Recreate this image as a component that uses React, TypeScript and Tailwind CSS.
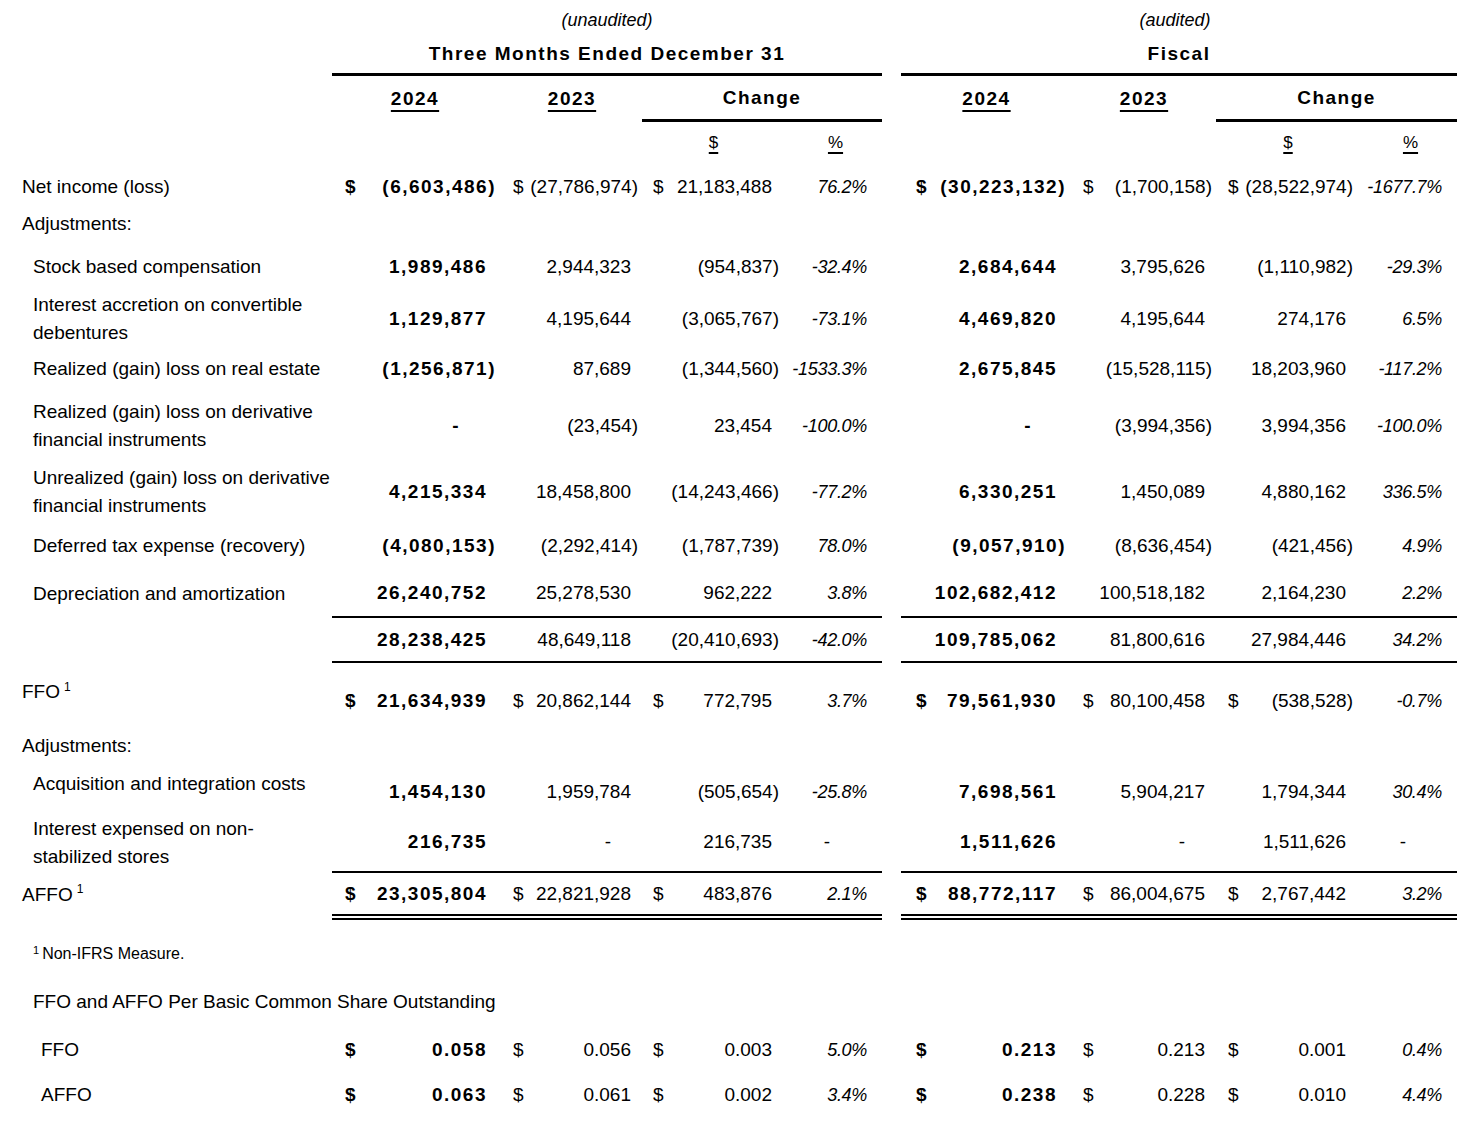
import React from "react";

const GRID =
  "grid grid-cols-[332px_170px_140px_143px_97px_19px_171px_144px_144px_97px_17px]";

const parenPr = ["pr-[6px]", "pr-[4px]", "pr-[6px]", "pr-[15px]", "pr-[6px]", "pr-[4px]", "pr-[7px]", "pr-[15px]"];
const digitPr = ["pr-[15px]", "pr-[11px]", "pr-[13px]", "pr-[15px]", "pr-[15px]", "pr-[11px]", "pr-[14px]", "pr-[15px]"];
const dashPr = ["pr-[42px]", "pr-[31px]", "pr-[35px]", "pr-[52px]", "pr-[40px]", "pr-[31px]", "pr-[35px]", "pr-[51px]"];
const dollarPl = ["pl-[13px]", "pl-[11px]", "pl-[11px]", "", "pl-[15px]", "pl-[11px]", "pl-[12px]", ""];

function cx(...a: (string | false | null | undefined)[]) {
  return a.filter(Boolean).join(" ");
}

function ValueCell({
  v,
  idx,
  dollar,
  border,
  valCls,
}: {
  v: string;
  idx: number;
  dollar?: boolean;
  border?: string;
  valCls?: string;
}) {
  const bold = idx === 0 || idx === 4;
  let pr = digitPr[idx];
  let style = bold ? "font-bold tracking-[1.5px]" : "";
  if (v === "-") {
    pr = dashPr[idx];
  } else if (v.endsWith("%")) {
    pr = digitPr[idx];
    style = "italic text-[18px] tracking-[-0.3px]";
  } else if (v.startsWith("(")) {
    pr = parenPr[idx];
  }
  return (
    <div className={cx("flex items-center", border, valCls)}>
      {dollar && idx % 4 !== 3 ? (
        <span className={cx(dollarPl[idx], bold && "font-bold")}>$</span>
      ) : null}
      {v ? <span className={cx("ml-auto whitespace-nowrap", pr, style)}>{v}</span> : null}
    </div>
  );
}

function Row({
  h,
  label,
  labelCls,
  vals,
  dollar,
  border,
  valCls,
}: {
  h: string;
  label?: React.ReactNode;
  labelCls?: string;
  vals?: string[];
  dollar?: boolean;
  border?: string;
  valCls?: string;
}) {
  const v = vals ?? ["", "", "", "", "", "", "", ""];
  return (
    <div className={cx(GRID, h)}>
      <div className={cx("flex items-center whitespace-nowrap leading-[28px]", labelCls ?? "pl-[33px]")}>
        <div>{label}</div>
      </div>
      {v.slice(0, 4).map((x, i) => (
        <ValueCell key={i} v={x} idx={i} dollar={dollar} border={border} valCls={valCls} />
      ))}
      <div />
      {v.slice(4).map((x, i) => (
        <ValueCell key={i + 4} v={x} idx={i + 4} dollar={dollar} border={border} valCls={valCls} />
      ))}
      <div />
    </div>
  );
}

const Sup = () => <sup className="text-[12px] ml-[4px] top-[-0.6em]">1</sup>;

export default function App() {
  return (
    <div className="w-[1474px] h-[1122px] bg-white text-black font-['Liberation_Sans',Arial,sans-serif] text-[19px] leading-[28px]">
      {/* header row 0 */}
      <div className={cx(GRID, "h-[36px]")}>
        <div />
        <div className="col-span-4 flex items-center justify-center italic text-[18px] pt-[4px]">(unaudited)</div>
        <div />
        <div className="col-span-4 flex items-center justify-center italic text-[18px] pr-[8px] pt-[4px]">(audited)</div>
        <div />
      </div>
      {/* header row 1 */}
      <div className={cx(GRID, "h-[40px]")}>
        <div />
        <div className="col-span-4 flex items-center justify-center font-bold tracking-[1.5px] border-b-[3px] border-black pb-[2px]">
          Three Months Ended December 31
        </div>
        <div />
        <div className="col-span-4 flex items-center justify-center font-bold tracking-[1.5px] border-b-[3px] border-black pb-[2px]">
          Fiscal
        </div>
        <div />
      </div>
      {/* header row 2 */}
      <div className={cx(GRID, "h-[46px]")}>
        <div />
        <div className="flex items-center justify-center pr-[4px]">
          <span className="font-bold tracking-[1.5px] underline decoration-2 underline-offset-[5px]">2024</span>
        </div>
        <div className="flex items-center justify-center">
          <span className="font-bold tracking-[1.5px] underline decoration-2 underline-offset-[5px]">2023</span>
        </div>
        <div className="col-span-2 flex items-center justify-center font-bold tracking-[1.5px] border-b-[3px] border-black">
          Change
        </div>
        <div />
        <div className="flex items-center justify-center">
          <span className="font-bold tracking-[1.5px] underline decoration-2 underline-offset-[5px]">2024</span>
        </div>
        <div className="flex items-center justify-center">
          <span className="font-bold tracking-[1.5px] underline decoration-2 underline-offset-[5px]">2023</span>
        </div>
        <div className="col-span-2 flex items-center justify-center font-bold tracking-[1.5px] border-b-[3px] border-black">
          Change
        </div>
        <div />
      </div>
      {/* header row 3 */}
      <div className={cx(GRID, "h-[42px]")}>
        <div />
        <div />
        <div />
        <div className="flex items-center justify-center text-[17px]">
          <span className="underline decoration-2 underline-offset-[4px]">$</span>
        </div>
        <div className="flex items-center justify-center text-[17px] pl-[4px]">
          <span className="underline decoration-2 underline-offset-[4px]">%</span>
        </div>
        <div />
        <div />
        <div />
        <div className="flex items-center justify-center text-[17px]">
          <span className="underline decoration-2 underline-offset-[4px]">$</span>
        </div>
        <div className="flex items-center justify-center text-[17px] pl-[4px]">
          <span className="underline decoration-2 underline-offset-[4px]">%</span>
        </div>
        <div />
      </div>

      <Row
        h="h-[46px]"
        labelCls="pl-[22px]"
        label="Net income (loss)"
        dollar
        vals={["(6,603,486)", "(27,786,974)", "21,183,488", "76.2%", "(30,223,132)", "(1,700,158)", "(28,522,974)", "-1677.7%"]}
      />
      <Row h="h-[34px]" labelCls="pl-[22px] pb-[8px]" label="Adjustments:" />
      <Row
        h="h-[46px]"
        label="Stock based compensation"
        vals={["1,989,486", "2,944,323", "(954,837)", "-32.4%", "2,684,644", "3,795,626", "(1,110,982)", "-29.3%"]}
      />
      <Row
        h="h-[58px]"
        label={
          <>
            Interest accretion on convertible
            <br />
            debentures
          </>
        }
        vals={["1,129,877", "4,195,644", "(3,065,767)", "-73.1%", "4,469,820", "4,195,644", "274,176", "6.5%"]}
      />
      <Row
        h="h-[42px]"
        label="Realized (gain) loss on real estate"
        vals={["(1,256,871)", "87,689", "(1,344,560)", "-1533.3%", "2,675,845", "(15,528,115)", "18,203,960", "-117.2%"]}
      />
      <Row
        h="h-[72px]"
        label={
          <>
            Realized (gain) loss on derivative
            <br />
            financial instruments
          </>
        }
        vals={["-", "(23,454)", "23,454", "-100.0%", "-", "(3,994,356)", "3,994,356", "-100.0%"]}
      />
      <Row
        h="h-[60px]"
        label={
          <>
            Unrealized (gain) loss on derivative
            <br />
            financial instruments
          </>
        }
        vals={["4,215,334", "18,458,800", "(14,243,466)", "-77.2%", "6,330,251", "1,450,089", "4,880,162", "336.5%"]}
      />
      <Row
        h="h-[48px]"
        label="Deferred tax expense (recovery)"
        vals={["(4,080,153)", "(2,292,414)", "(1,787,739)", "78.0%", "(9,057,910)", "(8,636,454)", "(421,456)", "4.9%"]}
      />
      <Row
        h="h-[48px]"
        label="Depreciation and amortization"
        border="border-b-2 border-black"
        vals={["26,240,752", "25,278,530", "962,222", "3.8%", "102,682,412", "100,518,182", "2,164,230", "2.2%"]}
      />
      <Row
        h="h-[45px]"
        label=""
        border="border-b-2 border-black"
        vals={["28,238,425", "48,649,118", "(20,410,693)", "-42.0%", "109,785,062", "81,800,616", "27,984,446", "34.2%"]}
      />
      <Row
        h="h-[68px]"
        labelCls="pl-[22px] pb-[10px]"
        label={
          <>
            FFO
            <Sup />
          </>
        }
        dollar
        valCls="pt-[8px]"
        vals={["21,634,939", "20,862,144", "772,795", "3.7%", "79,561,930", "80,100,458", "(538,528)", "-0.7%"]}
      />
      <Row h="h-[30px]" labelCls="pl-[22px]" label="Adjustments:" />
      <Row
        h="h-[52px]"
        labelCls="pl-[33px] pb-[6px]"
        label="Acquisition and integration costs"
        valCls="pt-[10px]"
        vals={["1,454,130", "1,959,784", "(505,654)", "-25.8%", "7,698,561", "5,904,217", "1,794,344", "30.4%"]}
      />
      <Row
        h="h-[60px]"
        label={
          <>
            Interest expensed on non-
            <br />
            stabilized stores
          </>
        }
        border="border-b-2 border-black"
        vals={["216,735", "-", "216,735", "-", "1,511,626", "-", "1,511,626", "-"]}
      />
      <Row
        h="h-[47px]"
        labelCls="pl-[22px] pb-[4px]"
        label={
          <>
            AFFO
            <Sup />
          </>
        }
        dollar
        border="border-b-[6px] border-double border-black"
        vals={["23,305,804", "22,821,928", "483,876", "2.1%", "88,772,117", "86,004,675", "2,767,442", "3.2%"]}
      />
      <Row
        h="h-[58px]"
        labelCls="pl-[33px] pt-[10px] text-[16px]"
        label={
          <>
            <sup className="text-[11px] mr-[3px]">1</sup>Non-IFRS Measure.
          </>
        }
      />
      <Row h="h-[48px]" label="FFO and AFFO Per Basic Common Share Outstanding" />
      <Row
        h="h-[48px]"
        labelCls="pl-[41px]"
        label="FFO"
        dollar
        vals={["0.058", "0.056", "0.003", "5.0%", "0.213", "0.213", "0.001", "0.4%"]}
      />
      <Row
        h="h-[42px]"
        labelCls="pl-[41px]"
        label="AFFO"
        dollar
        vals={["0.063", "0.061", "0.002", "3.4%", "0.238", "0.228", "0.010", "4.4%"]}
      />
    </div>
  );
}
